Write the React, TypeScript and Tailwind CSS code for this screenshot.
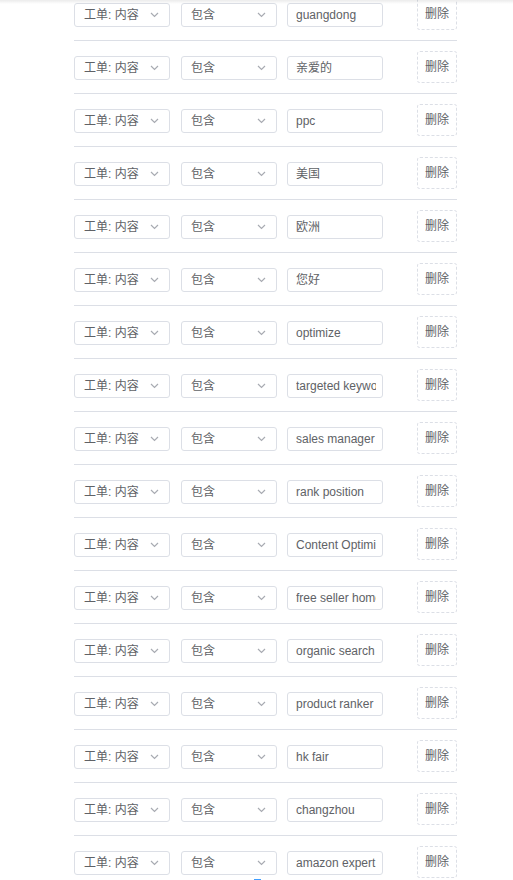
import React from "react";

const values = [
  "guangdong",
  "亲爱的",
  "ppc",
  "美国",
  "欧洲",
  "您好",
  "optimize",
  "targeted keywords",
  "sales manager",
  "rank position",
  "Content Optimization",
  "free seller home",
  "organic search",
  "product ranker",
  "hk fair",
  "changzhou",
  "amazon expert",
];

function Chevron() {
  return (
    <svg width="9" height="6" viewBox="0 0 9 6" className="shrink-0">
      <path d="M1 1 L4.5 4.5 L8 1" fill="none" stroke="#a8abb2" strokeWidth="1.2" />
    </svg>
  );
}

function Select({ label }: { label: string }) {
  return (
    <div className="mt-[2px] w-[96px] h-[24px] flex items-center justify-between border border-[#dcdfe6] rounded-[3px] bg-white pl-[9px] pr-[10px] text-[12px] text-[#606266]">
      <span className="whitespace-nowrap">{label}</span>
      <Chevron />
    </div>
  );
}

export default function App() {
  return (
    <div
      className="relative h-[880px] w-[513px] overflow-hidden bg-white"
      style={{ fontFamily: '"Liberation Sans", "Noto Sans CJK SC", sans-serif' }}
    >
      <div className="mt-[-12px] ml-[74px] w-[383px]">
        {values.map((v, i) => (
          <div key={i} className="flex items-center py-[10px] border-b border-[#dcdfe6]">
            <Select label="工单: 内容" />
            <div className="w-[11px]" />
            <Select label="包含" />
            <div className="w-[10px]" />
            <div className="mt-[2px] w-[96px] h-[24px] flex items-center border border-[#dcdfe6] rounded-[3px] bg-white pl-[8px] pr-[6px] text-[12px] text-[#606266]">
              <div className="flex-1 overflow-hidden whitespace-nowrap">{v}</div>
            </div>
            <div className="ml-auto w-[40px] h-[32px] flex items-center justify-center border border-dashed border-[#dcdfe6] rounded-[3px] text-[12px] text-[#606266]">
              删除
            </div>
          </div>
        ))}
      </div>
      <div className="absolute left-[254px] top-[879px] w-[7px] h-[1px] bg-[#409eff]" />
      <div className="absolute inset-x-0 top-0 h-[4px] bg-gradient-to-b from-[rgba(0,0,0,0.08)] to-transparent" />
    </div>
  );
}
